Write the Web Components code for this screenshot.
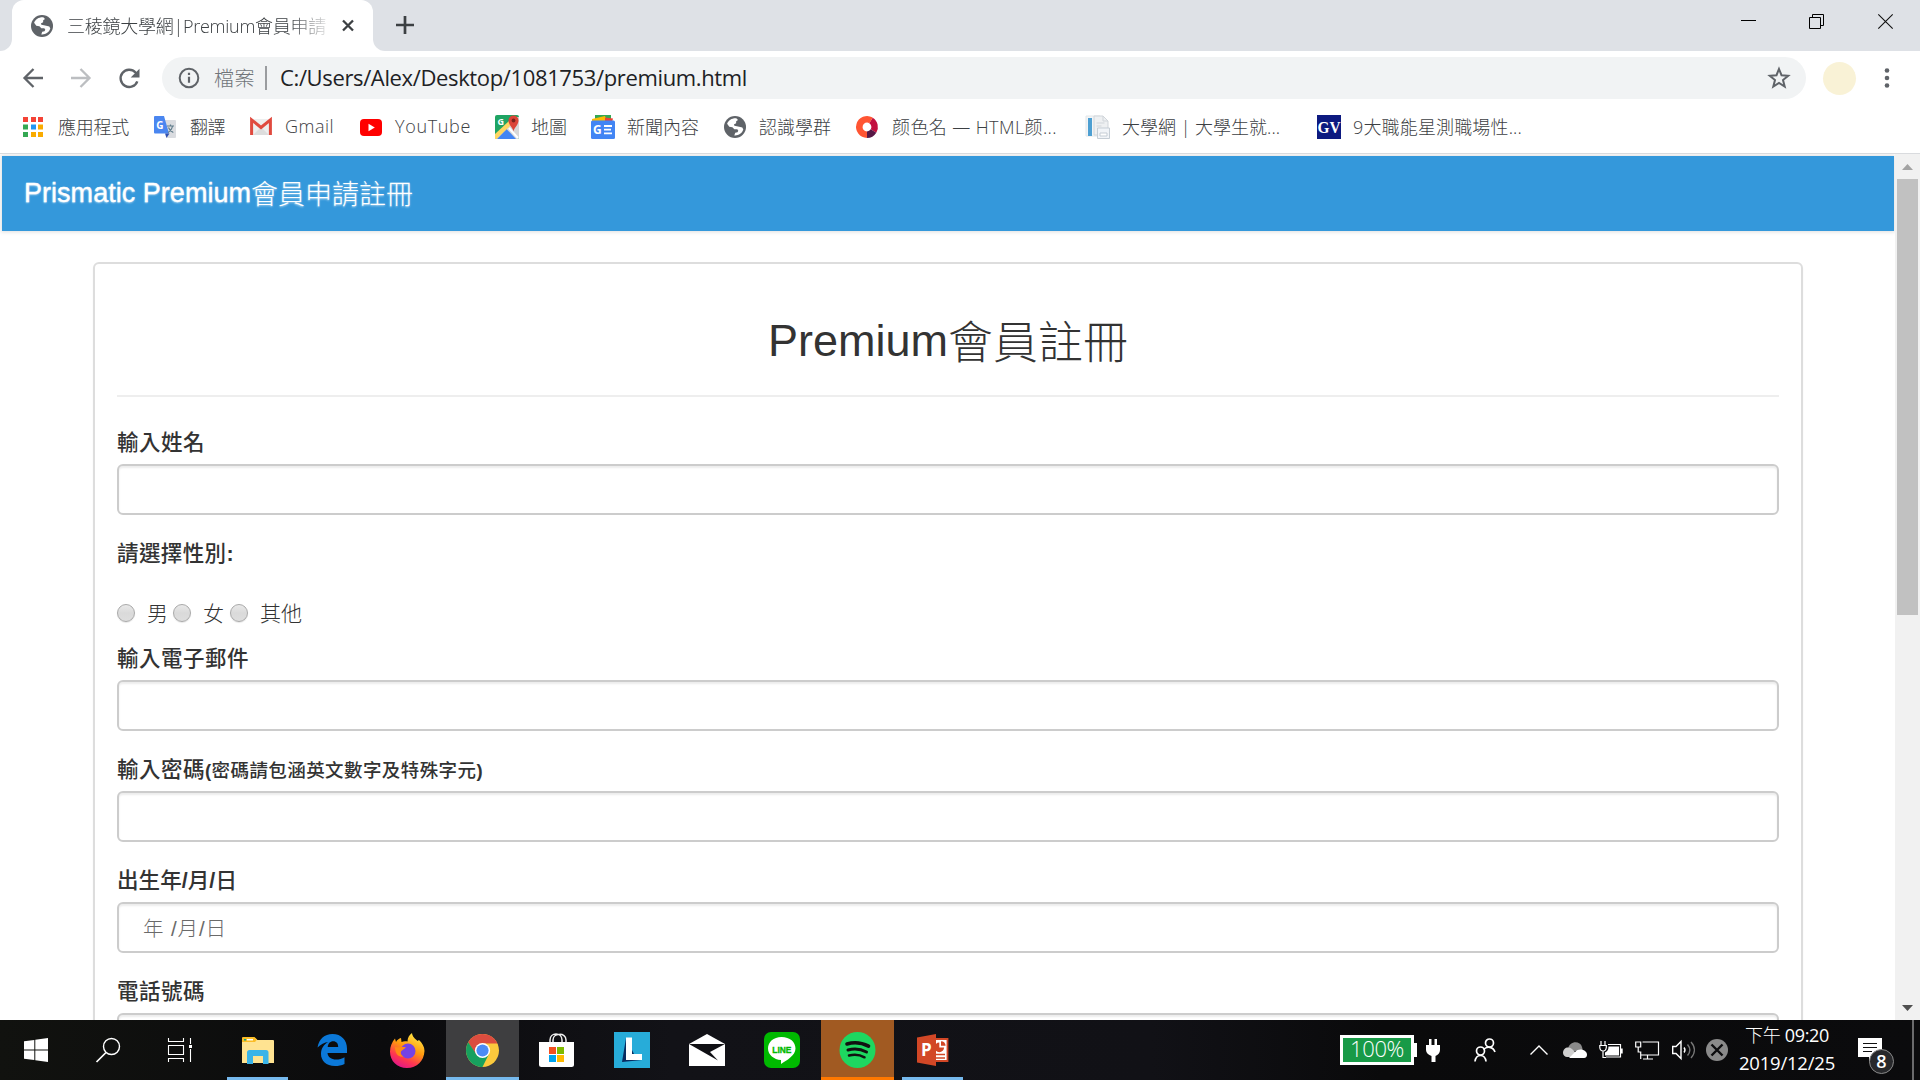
<!DOCTYPE html>
<html lang="zh-Hant">
<head>
<meta charset="utf-8">
<title>三稜鏡大學網|Premium會員申請註冊</title>
<style>
html,body{margin:0;padding:0;width:1920px;height:1080px;overflow:hidden;background:#fff}
body{font-family:"Open Sans","Noto Sans CJK TC",sans-serif;font-weight:300}
</style>
</head>
<body>
<desktop-screen></desktop-screen>
<script>
const globe = '<circle cx="11" cy="11" r="11" fill="#5f6368"/><path fill="#fff" d="M12.6 2.4c-4.3-.5-8 1.800-9.500 5.400l2.200 2.900 3.100.5 1.900 2 3 .1 1 1.500-.8 1.500-2.300.4-.9 2.700c4.200.3 7.800-1.800 9-5.800l-1-2-2.100-.5-3.300-.9-2.500-.4-.5-1.400 2.200-1.100.1-2.100 1.800-1.200z"/>';
const ICONS = {
globe:[22,22,globe],
close:[14,14,'<path d="M2 1.500l10 10M12 1.500L2 11.500" stroke="#3c4043" stroke-width="2.300"/>'],
plus:[18,18,'<path d="M9 0v18M0 9h18" stroke="#3c4043" stroke-width="2.700"/>'],
min:[15,15,'<path d="M0 6.500h15" stroke="#000"/>'],
restore:[15,15,'<path d="M.5 3.500h11v11H.5zM3.500 3V.5h11v11H12" fill="none" stroke="#000"/>'],
xwin:[15,15,'<path d="M.3.3l14.400 14.400M14.700.3L.3 14.700" stroke="#111" stroke-width="1.100"/>'],
back:[20,20,'<path d="M20 10H2M10.500 1L1.500 10l9 9" fill="none" stroke="#5f6368" stroke-width="2.300"/>'],
fwd:[20,20,'<path d="M0 10h18M9.500 1l9 9-9 9" fill="none" stroke="#bcbec1" stroke-width="2.300"/>'],
reload:[21,21,'<path d="M18.300 13.300A8.600 8.600 0 1 1 16.500 4.500L18.500 6.600" fill="none" stroke="#5f6368" stroke-width="2.400"/><path d="M20.500 .8v8.800h-8.800z" fill="#5f6368"/>'],
info:[22,22,'<circle cx="11" cy="11" r="9.300" fill="none" stroke="#5f6368" stroke-width="2"/><path d="M11 9.800v6M11 5.700v2.200" stroke="#5f6368" stroke-width="2.200"/>'],
star:[22,22,'<path d="M11 2l2.500 6.200 6.700.5-5.200 4.300 1.700 6.600L11 16l-5.700 3.600L7 13 1.800 8.700l6.700-.5z" fill="none" stroke="#5f6368" stroke-width="2"/>'],
dots:[6,20,'<g fill="#5f6368"><circle cx="3" cy="2.500" r="2.300"/><circle cx="3" cy="10" r="2.300"/><circle cx="3" cy="17.500" r="2.300"/></g>'],
apps:[20,20,'<g fill="#f44336"><path d="M0 0h5v5H0zM8 0h5v5H8zM15 0h5v5h-5z"/></g><path fill="#34a853" d="M0 7.500h5v5H0zM0 15h5v5H0z"/><path fill="#2196f3" d="M8 7.500h5v5H8z"/><path fill="#f9ab00" d="M15 7.500h5v5h-5zM8 15h5v5H8zM15 15h5v5h-5z"/>'],
translate:[22,22,'<path d="M9 4h12a1 1 0 0 1 1 1v16a1 1 0 0 1-1 1H13z" fill="#dadce0"/><path d="M1 0h9l5 17.500H1a1 1 0 0 1-1-1V1a1 1 0 0 1 1-1z" fill="#4a86f0"/><path d="M11 17.500h4.500L12.500 22z" fill="#3050b0"/><text x="2.300" y="12.500" font-size="10" font-weight="700" fill="#fff" font-family="Open Sans">G</text><path d="M13 10h7M16.500 8.500V10M18.500 10c-.5 3-2 5-4.500 6.500M14.500 11.500c.8 2.300 2.500 4 4.800 5" fill="none" stroke="#607d8b" stroke-width="1.200"/>'],
gmail:[22,18,'<path d="M1 1h20v16H1z" fill="#eee"/><path d="M3 17l8-8 8 8" fill="#ddd"/><path d="M1.600 17V1.800L11 9.500l9.400-7.700V17" fill="none" stroke="#e04a3f" stroke-width="3"/>'],
youtube:[22,17,'<rect width="22" height="17" rx="4" fill="#f00"/><path d="M8.500 4.800v7.400l6.300-3.700z" fill="#fff"/>'],
maps:[24,24,'<rect width="24" height="24" rx="2" fill="#1fa463"/><path d="M0 22L22 2h2v20a2 2 0 0 1-2 2H2z" fill="#d8d8d8"/><path d="M2 24l9.500-10L21 24z" fill="#4285f4"/><path d="M0 19L14 6l3 3L1.500 24H0z" fill="#fdd663"/><path d="M14 13l9 10" stroke="#fff" stroke-width="2"/><text x="2.500" y="10" font-size="9" font-weight="700" fill="#fff" font-family="Open Sans">G</text><path d="M18.500 16.500c-.6-4-5-6.500-5-11a5 5 0 0 1 10 0c0 4.500-4.400 7-5 11z" fill="#db4437"/><circle cx="18.500" cy="5.500" r="1.900" fill="#7b231c"/>'],
news:[24,24,'<path d="M4 0h16v6H4z" fill="#34a853"/><path d="M1 4l13-3 2 5H1z" fill="#fbbc04"/><path d="M14 2.500l8 1-1 4h-7z" fill="#ea4335"/><rect y="5.500" width="24" height="18.500" rx="1.500" fill="#4285f4"/><text x="2" y="19" font-size="12" font-weight="700" fill="#fff" font-family="Open Sans">G</text><path d="M13 11h8M13 14.700h7M13 18.400h8" stroke="#fff" stroke-width="1.800"/>'],
ring:[22,22,'<g fill="none" stroke-width="6.500"><path d="M11 18.700A7.700 7.700 0 1 1 15 4.400" stroke="#ff5533"/><path d="M15 4.400A7.700 7.700 0 0 1 17.500 15" stroke="#c2103f"/><path d="M17.500 15A7.700 7.700 0 0 1 11 18.700" stroke="#571845"/></g>'],
docs:[24,24,'<path d="M0 1h14l4 4v16H0z" fill="#f3f5f6" stroke="#e2e6e9"/><path d="M2 3h4v18H2z" fill="#4d9fd2"/><path d="M8 1h9l5 5v14H8z" fill="#eef0f2" stroke="#d0d5da"/><path d="M17 1v5h5M10.500 8h8M10.500 11h5" fill="none" stroke="#d0d5da"/><path d="M11.500 13h12v10.500h-12z" fill="#f1f4f8" stroke="#c5cdd5"/><path d="M14 18h7v3h-7z" fill="#fff" stroke="#c5cdd5"/>'],
gv:[24,24,'<path fill="#0d1a80" d="M0 0h24v24H0z"/><text x="12" y="18" text-anchor="middle" textLength="23" lengthAdjust="spacingAndGlyphs" font-size="17" font-weight="700" fill="#fff" font-family="Liberation Serif">GV</text>'],
win:[24,24,'<path fill="#fff" d="M0 3.300L10.300 2v9.500H0zM11.300 1.800L24 0v11.500H11.300zM0 12.500h10.300V22L0 20.700zM11.300 12.500H24V24l-12.700-1.800z"/>'],
search:[24,24,'<circle cx="15.500" cy="8.500" r="8" fill="none" stroke="#fff" stroke-width="1.400"/><path d="M10 14.500L.5 24" stroke="#fff" stroke-width="1.700"/>'],
task:[24,24,'<path d="M.5 0v3.500h15V0M.5 7.500h15v9H.5zM.5 24v-3.500h15V24M22.500 0v6M22.500 11v13" fill="none" stroke="#fff" stroke-width="1.100"/><path d="M21 7h3v3h-3z" fill="#fff"/>'],
explorer:[32,27,'<path d="M0 2a1 1 0 0 1 1-1h12l2.500 2H31a1 1 0 0 1 1 1v22H0z" fill="#ffe391"/><path d="M0 1a1 1 0 0 1 1-1h11.500L15 2.500 13 5H0z" fill="#fbbd26"/><path d="M2 2.700h2" stroke="#0a8" stroke-width="1.500"/><path d="M5 2.700h6" stroke="#fff" stroke-width="1.500"/><path d="M5 27V15.500A2.500 2.500 0 0 1 7.500 13h16.500a2.500 2.500 0 0 1 2.500 2.500V27h-5.500v-8H11v8z" fill="#3ab4e8"/>'],
edge:[31,32,'<path d="M.5 13.500C2 5 7.500 0 15.500 0 24.500 0 30 6.300 30 14.500V19H10.500c.3 4.300 4 6.500 8.500 6.500 3.300 0 6-.8 8.500-2.300V30c-3 1.500-6 2-9.500 2C9 32 4 26.500 4 20c0-5.500 3-10 7.500-12C7.500 8 3.500 10.500.5 13.500zM10.700 13h10.500c0-3.500-1.800-5.700-5-5.700s-5.200 2.400-5.500 5.700z" fill="#0b78d8"/>'],
firefox:[34,35,'<defs><linearGradient id="f" x1=".8" y1="0" x2=".3" y2="1"><stop stop-color="#fff04a"/><stop offset=".45" stop-color="#ff980e"/><stop offset=".75" stop-color="#ff3750"/><stop offset="1" stop-color="#e0158c"/></linearGradient></defs><path d="M17 35C7 35 0 28 0 18.500 0 13.500 2 9 5 5.500L6 9c1-2 3-3.500 5-4l.5 4c2-1 4-1 6-.5 0-3.500 1.500-6.500 4.500-8.500.5 4 3 5.500 5.500 8l1.500-1c3 3 5.500 6.500 5.500 11C34 28 27 35 17 35z" fill="url(#f)"/><circle cx="18" cy="18" r="7.500" fill="#7542e5"/><path d="M5 14c4 1 7-1 11 .5l-4 3c-2 1-2 5 2 6-6 1-9-3-9-9.500z" fill="#ff8a16"/>'],
chrome:[33,33,'<circle cx="16.500" cy="16.500" r="16.500" fill="#fbc93d"/><path d="M16.500 16.500L2.200 8.300A16.500 16.500 0 0 1 30.800 8.300L31.500 9.500H16.500z" fill="#db4c3f"/><path d="M2.200 8.300L10 21l6.500-4.500V9z" fill="#db4c3f"/><path d="M2.200 8.300A16.500 16.500 0 0 0 16.500 33l6.200-12.500-12.200 0z" fill="#17a05e"/><circle cx="16.500" cy="16.500" r="7.600" fill="#fff"/><circle cx="16.500" cy="16.500" r="6.100" fill="#4b8bf5"/>'],
store:[35,34,'<path d="M11 10V7c0-8 12-8 12 0v3M14 10V7c0-7 13-8 13 0v3" fill="none" stroke="#eee" stroke-width="1.500"/><path d="M0 9h35v22.500a2.500 2.500 0 0 1-2.500 2.500h-30A2.500 2.500 0 0 1 0 31.500z" fill="#fff"/><path d="M10 14h7v7h-7z" fill="#f25022"/><path d="M18 14h7v7h-7z" fill="#7fba00"/><path d="M10 22h7v7h-7z" fill="#00a4ef"/><path d="M18 22h7v7h-7z" fill="#ffb900"/>'],
ell:[36,36,'<path fill="#27acd9" d="M0 0h36v36H0z"/><path d="M12 6L8 30l20-2-8-6z" fill="#082c60"/><path d="M12 5.500h6V22h10v6H12z" fill="#fff"/>'],
mail:[36,32,'<path d="M0 10L18 0l18 10v22H0z" fill="#fff"/><path d="M0 10h36L21 18l8 8.500z" fill="#101014"/>'],
line:[36,36,'<rect width="36" height="36" rx="7" fill="#00b900"/><path d="M17.500 5C26 5 31.500 10 31.500 16.500c0 7-9 12-14.500 15.500v-4C10 27.500 4 23 4 16.500 4 10 9.500 5 17.500 5z" fill="#fff"/><text x="17.800" y="20.500" text-anchor="middle" textLength="19" lengthAdjust="spacingAndGlyphs" font-size="9.500" font-weight="700" fill="#00b900" stroke="#00b900" stroke-width=".4" font-family="Liberation Sans">LINE</text>'],
spotify:[36,36,'<circle cx="17.500" cy="18" r="18" fill="#1ed760"/><g fill="none" stroke="#111" stroke-linecap="round"><path d="M7 12c7-2 15-1.200 21.500 2.200" stroke-width="3.600"/><path d="M8 18c6-1.800 13-1 18.500 2" stroke-width="3"/><path d="M9 23.500c5-1.400 11-.8 15.500 1.800" stroke-width="2.500"/></g>'],
ppt:[32,32,'<path d="M17 5h13.500v22H17z" fill="#fff" stroke="#d24726" stroke-width="1.800"/><path d="M22.300 8.600a4.800 4.800 0 1 0 4.800 4.800h-4.800z" fill="#d24726"/><path d="M24 7.200a4.800 4.800 0 0 1 4.600 4.600H24z" fill="#d24726"/><path d="M19 20.500h9M19 24h9" stroke="#d24726" stroke-width="1.600"/><path d="M0 3.500L19 0v32L0 28.500z" fill="#d24726"/><text x="4" y="22" font-size="17" font-weight="700" fill="#fff" font-family="Open Sans">P</text>'],
plug:[14,23,'<path d="M3 0h2.500v6h3V0H11v6h3v5c0 3-2 5-4.500 6v6h-4v-6C2.500 16 0 14 0 11V6h3z" fill="#fff"/>'],
people:[22,24,'<g fill="none" stroke="#fff" stroke-width="1.700"><circle cx="15.500" cy="5" r="4"/><circle cx="6.500" cy="13" r="4"/><path d="M9.500 11.500c3-3.300 9.500-3.300 11.500 2.500M1 23.500c1-8 10-8 11 0"/></g>'],
chev:[18,10,'<path d="M.5 9.500L9 1l8.500 8.500" fill="none" stroke="#fff" stroke-width="1.400"/>'],
cloud:[24,16,'<path d="M5 7C6-1 17-2 19 5l1 4H5z" fill="#8a8a8a"/><path d="M0 11c0-5 5-7 9-4l8 8H4c-2 0-4-2-4-4z" fill="#cfcfcf"/><path d="M6 16l6-6c4-5 12-2 12 2.500 0 2-1 3.500-3 3.500z" fill="#fff"/>'],
pow:[24,18,'<path d="M2 0v4M6 0v4M.8 4.500h6.500v2C7 9 6 10 4.200 10S1 9 .8 6.500zM4 10v6.500h3M9 3.500h12.500v12.500H7" fill="none" stroke="#fff" stroke-width="1.200"/><path d="M9.500 5.500h10.500v9H6V11.500c2.500-1 3.500-3 3.500-6z" fill="#fff"/><path d="M22.800 7.500v5" stroke="#fff" stroke-width="1.800"/>'],
net:[24,19,'<path d="M7.500 1H23.500v13H6M12.500 14v4M8 18h10M.7 1h5v5h-5zM3.200 6v5h2.500v7" fill="none" stroke="#fff" stroke-width="1.200"/>'],
vol:[23,20,'<path d="M.7 6.500H4l5-5v17l-5-5H.7z" fill="none" stroke="#fff" stroke-width="1.400"/><path d="M12 7.500c1.200 1.500 1.200 3.500 0 5" fill="none" stroke="#fff" stroke-width="1.400"/><path d="M15.500 4.500c3 3.500 3 7.500 0 11M19 2c4.500 5 4.500 11 0 16" fill="none" stroke="#777" stroke-width="1.400"/>'],
xcirc:[22,22,'<circle cx="11" cy="11" r="11" fill="#8a8a8a"/><path d="M5.500 5.500l11 11M16.500 5.500l-11 11" stroke="#0c0c0e" stroke-width="2.400"/>'],
note:[24,24,'<path d="M0 0h24v19H14.500L11 24V19H0z" fill="#fff"/><path d="M5 5.500h14M5 9.500h14M5 13.500h9" stroke="#111" stroke-width="1.200"/>'],
up:[11,6,'<path d="M5.500 0L11 6H0z" fill="#a3a3a3"/>'],
down:[11,6,'<path d="M0 0h11L5.500 6z" fill="#505050"/>']
};

class Base extends HTMLElement{
  constructor(){super();this.attachShadow({mode:'open'});}
  a(n,d){return this.getAttribute(n)??d;}
  connectedCallback(){this.shadowRoot.innerHTML='<style>*{box-sizing:border-box}</style>'+this.view();this.ready&&this.ready();}
}
class UiIcon extends Base{
  view(){const i=ICONS[this.a('name')];
    return `<style>:host{display:block;flex:none;width:${i[0]}px;height:${i[1]}px;margin-left:${this.a('ml',0)}px;margin-top:${this.a('mt',0)}px}svg{display:block;overflow:visible}</style><svg width="${i[0]}" height="${i[1]}" viewBox="0 0 ${i[0]} ${i[1]}">${i[2]}</svg>`;}
}
/* Text spread over a given width by adjusting its tracking. */
class FitText extends Base{
  view(){return `<style>:host{display:block;flex:none;width:${this.a('w')}px;font-size:${this.a('size',18)}px;white-space:nowrap;margin-left:${this.a('ml',0)}px;padding-bottom:${this.a('up',0)}px;padding-top:${this.a('down',0)}px}span{display:inline-block}</style><span><slot></slot></span>`;}
  ready(){const s=this.shadowRoot.querySelector('span'),n=[...this.textContent].length;
    const d=(+this.a('w')-s.getBoundingClientRect().width)/n;s.style.letterSpacing=d.toFixed(3)+'px';}
}
class TabStrip extends Base{
  view(){return `<style>:host{display:flex;flex:none;height:51px;background:#dee1e6;align-items:flex-start}
  .edge{width:12px;height:51px;background:#fff}.edge i{display:block;height:51px;background:#dee1e6}
  .l i{border-bottom-right-radius:12px}.r i{border-bottom-left-radius:12px}
  .tab{width:361px;height:51px;background:#fff;border-radius:12px 12px 0 0;display:flex;align-items:center;color:#3c4043}
  .top{background:#dee1e6}
  .t{margin-left:14px;width:259px;overflow:hidden;-webkit-mask-image:linear-gradient(90deg,#000 86%,transparent 103%)}
  .win{margin-left:auto;display:flex;margin-top:14px;padding-right:27px}</style>
  <div class="edge l"><i></i></div><div class="top"><div class="tab"><ui-icon name="globe" ml="19"></ui-icon><div class="t"><fit-text w="259" size="18" up="2">三稜鏡大學網|Premium會員申請</fit-text></div><ui-icon name="close" ml="15"></ui-icon></div></div><div class="edge r"><i></i></div>
  <ui-icon name="plus" ml="11" mt="16"></ui-icon>
  <div class="win"><ui-icon name="min"></ui-icon><ui-icon name="restore" ml="53"></ui-icon><ui-icon name="xwin" ml="54"></ui-icon></div>`;}
}
class AddressBar extends Base{
  view(){return `<style>:host{display:flex;flex:none;height:54px;background:#fff;align-items:center}
  .box{margin-left:22px;width:1644px;height:42px;border-radius:21px;background:#f1f3f4;display:flex;align-items:center;color:#202124}
  .g{color:#70757a}.bar{width:2px;height:24px;background:#9a9c9f;margin-left:10px}
  .av{width:33px;height:33px;border-radius:50%;background:#f9f2d6;margin-left:17px}</style>
  <ui-icon name="back" ml="23"></ui-icon><ui-icon name="fwd" ml="28"></ui-icon><ui-icon name="reload" ml="28"></ui-icon>
  <div class="box"><ui-icon name="info" ml="16"></ui-icon><fit-text class="g" w="41" size="20" ml="14" up="2">檔案</fit-text><div class="bar"></div><fit-text w="467" size="22" ml="13" up="2" style="font-weight:400">C:/Users/Alex/Desktop/1081753/premium.html</fit-text><ui-icon name="star" ml="1021"></ui-icon></div>
  <div class="av"></div><ui-icon name="dots" ml="28"></ui-icon>`;}
}
class BookmarkItem extends Base{
  view(){return `<style>:host{display:flex;flex:none;align-items:center;width:${this.a('span')}px}</style><ui-icon name="${this.a('icon')}"></ui-icon><fit-text w="${this.a('w')}" size="18" ml="${this.a('gap',14)}" up="2">${this.textContent}</fit-text>`;}
}
class BookmarkBar extends Base{
  view(){const b=[['apps',131,71,15,'應用程式'],['translate',96,35,14,'翻譯'],['gmail',110,49,13,'Gmail'],['youtube',135,76,13,'YouTube'],['maps',96,36,12,'地圖'],['news',133,72,12,'新聞內容'],['globe',132,72,13,'認識學群'],['ring',230,165,14,'颜色名 — HTML颜...'],['docs',231,158,12,'大學網 | 大學生就...'],['gv',220,169,12,'9大職能星測職場性...']];
  return `<style>:host{display:flex;flex:none;height:49px;background:#fff;border-bottom:1px solid #d9dbde;align-items:center;padding:0 0 4px 23px;box-sizing:border-box;color:#3c4043}</style>`+b.map(x=>`<bookmark-item icon="${x[0]}" span="${x[1]}" w="${x[2]}" gap="${x[3]}">${x[4]}</bookmark-item>`).join('');}
}
class SiteHeader extends Base{
  view(){return `<style>:host{display:block;margin:2px 1px 0 2px;height:75px;background:#3498db;box-shadow:0 0 4px 1px rgba(0,0,0,.13);padding:22px 0 0 22px;box-sizing:border-box;color:#fff;font:400 27px/31px "Liberation Sans","Noto Sans CJK TC",sans-serif;text-shadow:0 1px 2px rgba(255,255,255,.6);}
  div{display:flex}.p{-webkit-text-stroke:.3px #fff}.c{font-weight:300}</style><div><fit-text class="p" w="227" size="27">Prismatic Premium</fit-text><fit-text class="c" w="162" size="27" down="2">會員申請註冊</fit-text></div>`;}
}
class FormField extends Base{
  view(){const p=this.a('hint');
  return `<style>:host{display:block;height:88px;margin-bottom:23px}
  .l{height:37px;line-height:33px;display:flex;font-weight:500;color:#333;align-items:baseline}
  .i{height:51px;border:2px solid #ccc;border-radius:6px;box-shadow:inset 0 2px 2px rgba(0,0,0,.075);padding-left:24px;display:flex;align-items:center;color:#6a6a6a;font-weight:300}</style>
  <div class="l"><slot></slot></div><div class="i">${p?`<fit-text w="84" size="20.5" up="2">${p}</fit-text>`:''}</div>`;}
}
class RadioOption extends Base{
  view(){return `<style>:host{display:flex;flex:none;align-items:center;width:${this.a('span')}px}i{width:18px;height:18px;border-radius:50%;border:1px solid #a9a9a9;background:linear-gradient(#e9e9e9,#dadada 50%,#dedede);margin-right:12px;box-shadow:0 1px 1px rgba(0,0,0,.1)}</style><i></i><fit-text w="${this.a('w')}" size="21" up="3">${this.textContent}</fit-text>`;}
}
class RegisterCard extends Base{
  view(){return `<style>:host{display:block;margin:31px 0 0 93px;width:1710px;height:900px;border:2px solid #ddd;border-radius:6px;box-shadow:0 2px 2px rgba(0,0,0,.05);padding:0 22px;box-sizing:border-box;color:#333;font-family:"Liberation Sans","Noto Sans CJK TC",sans-serif}
  h1{margin:0 0 30px;padding-top:52px;height:133px;border-bottom:2px solid #eee;font-size:45px;line-height:50px;display:flex;justify-content:center;font-weight:400}
  .c{font-weight:200}b{font-weight:700}
  .q{height:60px;line-height:33px;font-weight:500}.r{height:30px;display:flex;align-items:center;margin-bottom:15px;font-weight:300}</style>
  <h1><fit-text w="180" size="45">Premium</fit-text><fit-text class="c" w="180" size="45" down="3">會員註冊</fit-text></h1>
  <form-field><fit-text w="88" size="21.5">輸入姓名</fit-text></form-field>
  <div class="q"><fit-text w="117" size="21.5">請選擇性別<b>:</b></fit-text></div>
  <div class="r"><radio-option span="56" w="21">男</radio-option><radio-option span="57" w="21">女</radio-option><radio-option span="80" w="42">其他</radio-option></div>
  <form-field><fit-text w="132" size="21.5">輸入電子郵件</fit-text></form-field>
  <form-field><fit-text w="88" size="21.5">輸入密碼</fit-text><fit-text w="278" size="18.5"><b>(</b>密碼請包涵英文數字及特殊字元<b>)</b></fit-text></form-field>
  <form-field hint="年 /月/日"><fit-text w="120" size="21.5">出生年<b>/</b>月<b>/</b>日</fit-text></form-field>
  <form-field><fit-text w="88" size="21.5">電話號碼</fit-text></form-field>`;}
}
class ScrollRail extends Base{
  view(){return `<style>:host{display:flex;flex:none;flex-direction:column;width:25px;background:#f1f1f1;padding:0 2px;box-sizing:border-box}
  .b{height:25px;display:flex;align-items:center;justify-content:center}.th{height:436px;background:#c1c1c1;width:21px}.d{margin-top:auto}</style>
  <div class="b"><ui-icon name="up" mt="1"></ui-icon></div><div class="th"></div><div class="b d"><ui-icon name="down"></ui-icon></div>`;}
}
class TaskButton extends Base{
  view(){return `<style>:host{display:flex;flex:none;flex-direction:column;align-items:center;width:${this.a('w')}px;height:60px;margin-left:${this.a('ml',0)}px;background:${this.a('bg','none')}}
  .i{height:57px;padding-top:3px;display:flex;align-items:center}.u{height:3px;width:100%;background:${this.a('line','none')}}</style><div class="i"><ui-icon name="${this.a('icon')}"></ui-icon></div><div class="u"></div>`;}
}
class TaskBar extends Base{
  view(){return `<style>:host{display:flex;flex:none;height:60px;background:linear-gradient(90deg,#11120f 0,#0b0b0d 20%,#121217 35%,#111116 60%,#0a0a0b 72%,#0b0b0d);align-items:center;color:#fff}
  .bat{margin-left:377px;width:74px;height:30px;border:3px solid #fff;background:#189a47;display:flex;align-items:center;justify-content:center;color:#fff}
  .nub{width:3px;height:14px;background:#fff}
  .clock{margin-left:11px;width:96px;display:flex;flex-direction:column;align-items:center;line-height:27px;padding-bottom:2px;font-weight:400}
  .n{margin-left:23px;position:relative;width:24px;height:24px}
  .bd{position:absolute;left:11px;top:11px;width:25px;height:25px;border-radius:50%;background:#27282b;border:1px solid #8a8a8a;display:flex;align-items:center;justify-content:center;font:600 18px "Open Sans",sans-serif;padding-bottom:1px}
  .end{width:2px;height:60px;background:#6a6a6c;margin-left:30px}.k{font-weight:300}</style>
  <task-button icon="win" w="72"></task-button><task-button icon="search" w="72"></task-button><task-button icon="task" w="72"></task-button>
  <task-button icon="explorer" w="61" ml="11" line="#76b9ed"></task-button><task-button icon="edge" w="61" ml="14"></task-button><task-button icon="firefox" w="61" ml="13"></task-button>
  <task-button icon="chrome" w="73" ml="9" bg="#3e3e40" line="#76b9ed"></task-button><task-button icon="store" w="73" ml="1"></task-button><task-button icon="ell" w="73" ml="2"></task-button><task-button icon="mail" w="73" ml="2"></task-button><task-button icon="line" w="73" ml="2"></task-button>
  <task-button icon="spotify" w="73" ml="3" bg="#a15a22" line="#ff7800"></task-button><task-button icon="ppt" w="61" ml="8" line="#76b9ed"></task-button>
  <div class="bat"><fit-text w="54" size="22" up="5">100%</fit-text></div><div class="nub"></div><ui-icon name="plug" ml="9"></ui-icon>
  <ui-icon name="people" ml="34"></ui-icon><ui-icon name="chev" ml="34"></ui-icon><ui-icon name="cloud" ml="15"></ui-icon><ui-icon name="pow" ml="12"></ui-icon><ui-icon name="net" ml="12"></ui-icon><ui-icon name="vol" ml="13"></ui-icon><ui-icon name="xcirc" ml="11"></ui-icon>
  <div class="clock"><fit-text w="84" size="18"><span class="k">下午</span> 09:20</fit-text><fit-text w="96" size="18.5">2019/12/25</fit-text></div>
  <div class="n"><ui-icon name="note"></ui-icon><div class="bd">8</div></div><div class="end"></div>`;}
}
class DesktopScreen extends Base{
  view(){return `<style>:host{display:flex;flex-direction:column;width:1920px;height:1080px;overflow:hidden}
  .view{display:flex;flex:none;height:866px;overflow:hidden;background:#fff}.page{width:1895px;overflow:hidden;display:flow-root}</style>
  <tab-strip></tab-strip><address-bar></address-bar><bookmark-bar></bookmark-bar>
  <div class="view"><div class="page"><site-header></site-header><register-card></register-card></div><scroll-rail></scroll-rail></div><task-bar></task-bar>`;}
}
Object.entries({'ui-icon':UiIcon,'fit-text':FitText,'tab-strip':TabStrip,'address-bar':AddressBar,'bookmark-item':BookmarkItem,'bookmark-bar':BookmarkBar,'site-header':SiteHeader,'form-field':FormField,'radio-option':RadioOption,'register-card':RegisterCard,'scroll-rail':ScrollRail,'task-button':TaskButton,'task-bar':TaskBar,'desktop-screen':DesktopScreen}).forEach(([n,c])=>customElements.define(n,c));
</script>
</body>
</html>
